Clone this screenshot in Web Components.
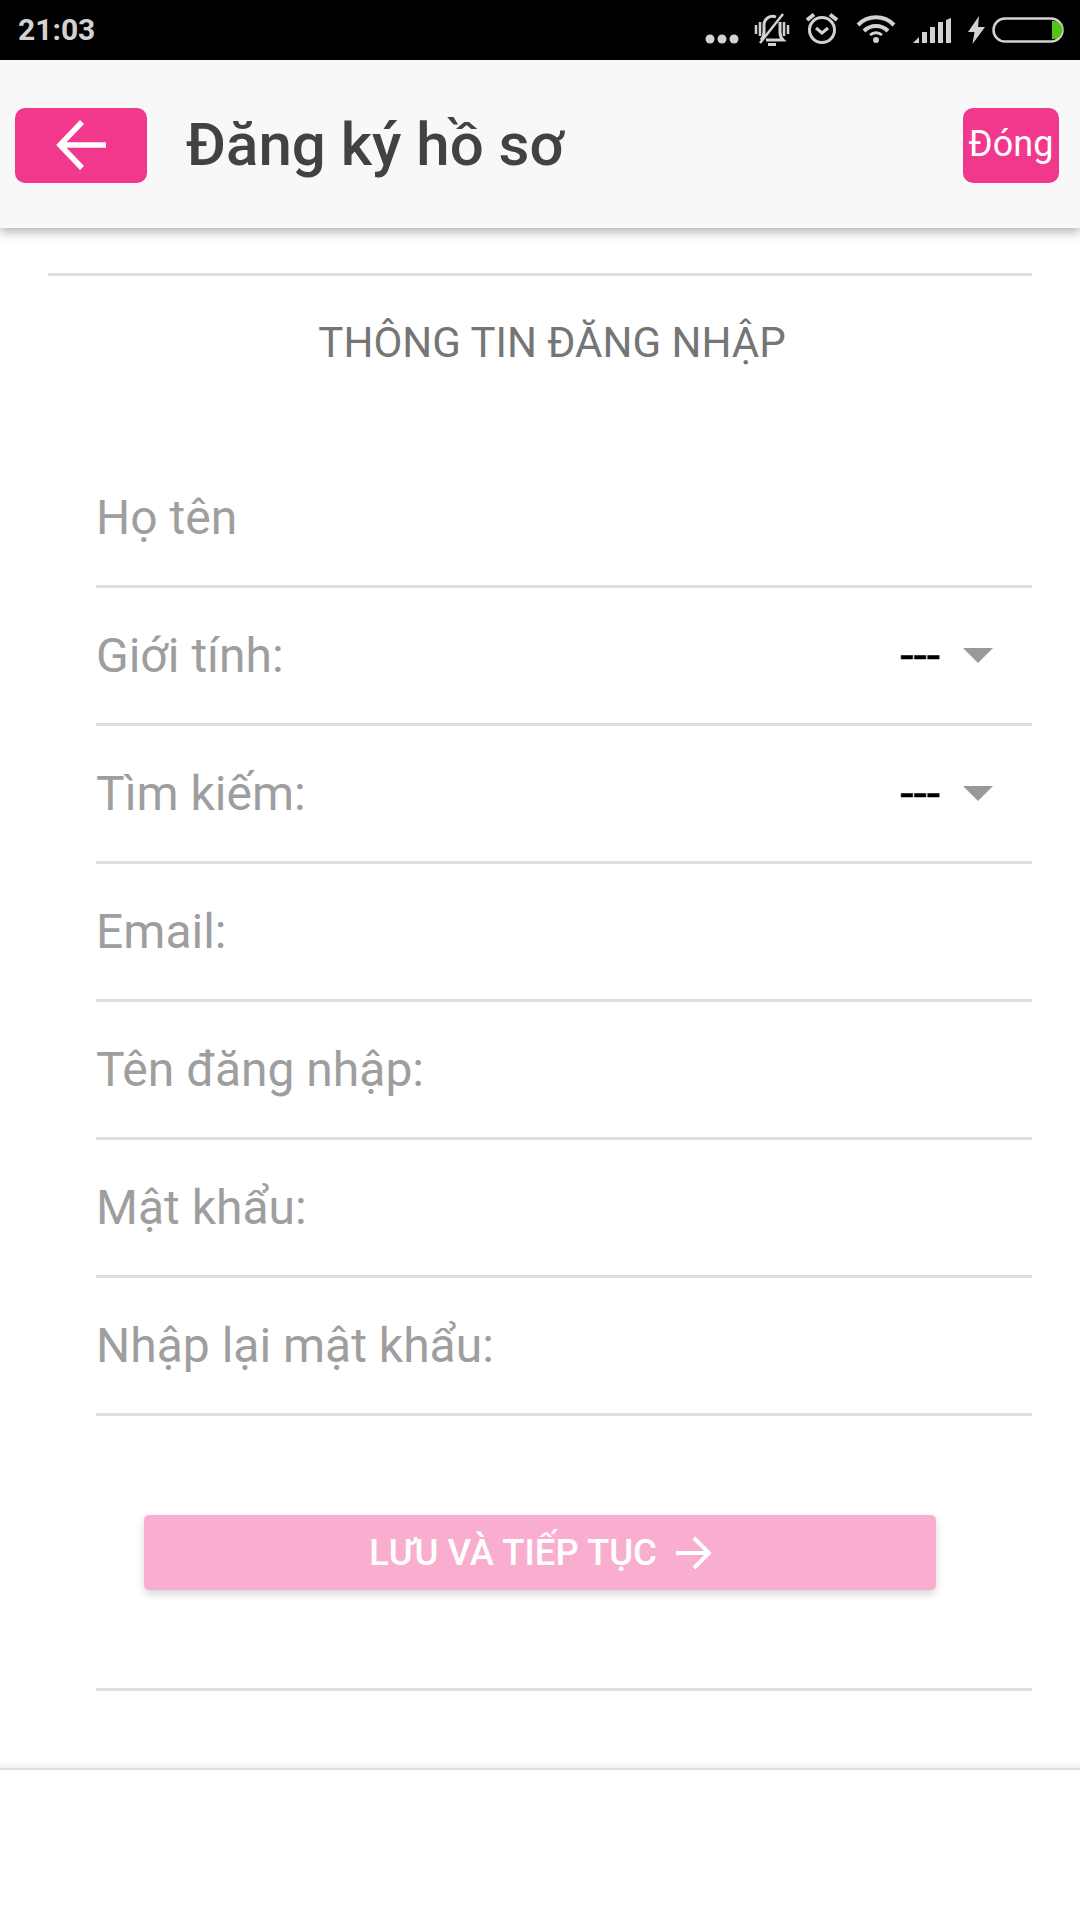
<!DOCTYPE html>
<html lang="vi">
<head>
<meta charset="utf-8">
<title>Đăng ký hồ sơ</title>
<style>
    html, body { margin: 0; padding: 0; background: #fff; }
    body { width: 1080px; height: 1920px; overflow: hidden; font-family: Roboto, "Noto Sans", sans-serif; }
</style>
</head>
<body>
<app-status-bar></app-status-bar>
<app-header title="Đăng ký hồ sơ" action="Đóng"></app-header>
<register-form heading="THÔNG TIN ĐĂNG NHẬP">
    <form-row label="Họ tên"></form-row>
    <form-row label="Giới tính:" value="---"></form-row>
    <form-row label="Tìm kiếm:" value="---"></form-row>
    <form-row label="Email:"></form-row>
    <form-row label="Tên đăng nhập:"></form-row>
    <form-row label="Mật khẩu:"></form-row>
    <form-row label="Nhập lại mật khẩu:"></form-row>
</register-form>

<script>
class AppStatusBar extends HTMLElement {
    constructor() {
        super();
        this.attachShadow({ mode: 'open' });
    }

    connectedCallback() {
        this.shadowRoot.innerHTML = `
            <style>
                :host {
                    display: flex;
                    align-items: center;
                    justify-content: space-between;
                    height: 60px;
                    background: #000;
                    padding: 0 16px 0 18px;
                    box-sizing: border-box;
                    color: #d2d2d2;
                }
                .time { font: 700 30px/60px Roboto, sans-serif; }
                .icons { display: flex; align-items: flex-start; height: 60px; }
                svg { display: block; flex: none; }
            </style>
            <span class="time">21:03</span>
            <div class="icons">
                <!-- dots -->
                <svg width="34" height="60" viewBox="0 0 34 60" style="margin-right:15px">
                    <g fill="#d2d2d2"><circle cx="5" cy="39" r="4.500"/><circle cx="17" cy="39" r="4.500"/><circle cx="29" cy="39" r="4.500"/></g>
                </svg>
                <!-- muted bell -->
                <svg width="36" height="60" viewBox="0 0 36 60" style="margin-right:15px">
                    <g fill="none" stroke="#d2d2d2" stroke-width="3">
                        <path d="M7 40q3-3 3-8v-7a8.500 8.500 0 0 1 12-8"/>
                        <path d="M26 22v10q0 5 3 8H12"/>
                        <path d="M14 44.500h8" stroke-width="3"/>
                        <path d="M2 25v9M6 22v14M30 22v14M34 25v9" stroke-width="2.500"/>
                        <path d="M6 43 L29 14" stroke-width="2.500"/>
                    </g>
                </svg>
                <!-- alarm -->
                <svg width="34" height="60" viewBox="0 0 34 60" style="margin-right:17px">
                    <g fill="none" stroke="#d2d2d2">
                        <circle cx="17" cy="30" r="12.500" stroke-width="3"/>
                        <path d="M11 28l6 5 6-5" stroke-width="3"/>
                        <path d="M2 20l7-5.500M32 20l-7-5.500" stroke-width="4"/>
                    </g>
                </svg>
                <!-- wifi -->
                <svg width="40" height="60" viewBox="0 0 40 60" style="margin-right:17px">
                    <g fill="none" stroke="#d2d2d2" stroke-width="4">
                        <path d="M2 25a25 25 0 0 1 36 0"/>
                        <path d="M8 31a17 17 0 0 1 24 0"/>
                    </g>
                    <path d="M14 35a9 9 0 0 1 12 0" fill="none" stroke="#d2d2d2" stroke-width="3"/>
                    <circle cx="20" cy="40" r="3" fill="#d2d2d2"/>
                </svg>
                <!-- signal -->
                <svg width="38" height="60" viewBox="0 0 38 60" style="margin-right:17px">
                    <g fill="#d2d2d2">
                        <path d="M0 43l6-6v6z"/>
                        <rect x="9" y="32" width="5" height="11"/>
                        <rect x="17" y="27" width="5" height="16"/>
                        <rect x="25" y="22" width="5" height="21"/>
                        <path d="M33 20l5-2v25h-5z"/>
                    </g>
                </svg>
                <!-- bolt -->
                <svg width="17" height="60" viewBox="0 0 17 60" style="margin-right:7px">
                    <path d="M11 16 L0 32 H6.500 L4.500 44 L17 27 H10z" fill="#d2d2d2"/>
                </svg>
                <!-- battery -->
                <svg width="72" height="60" viewBox="0 0 72 60">
                    <rect x="1.500" y="18.500" width="69" height="23" rx="11.500" fill="none" stroke="#d2d2d2" stroke-width="2.500"/>
                    <path d="M60 21h2a8.500 9 0 0 1 0 18h-2z" fill="#52c41a"/>
                </svg>
            </div>`;
    }
}

class AppHeader extends HTMLElement {
    constructor() {
        super();
        this.attachShadow({ mode: 'open' });
    }

    connectedCallback() {
        this.shadowRoot.innerHTML = `
            <style>
                :host {
                    display: flex;
                    align-items: center;
                    position: relative;
                    z-index: 1;
                    height: 168px;
                    box-sizing: border-box;
                    padding: 3px 21px 0 15px;
                    background: #f8f8f8;
                    box-shadow: 0 4px 10px rgba(0,0,0,0.3);
                }
                .btn {
                    display: flex;
                    align-items: center;
                    justify-content: center;
                    height: 75px;
                    background: #f2388c;
                    border-radius: 10px;
                    color: #fff;
                }
                .back { width: 132px; }
                .back svg { margin-left: 2px; margin-top: -2px; }
                .close { width: 96px; font: 400 36px/72px Roboto, sans-serif; padding-bottom: 3px; height: 72px; }
                h1 {
                    flex: 1;
                    margin: -2px 0 0 39px;
                    font: 500 60px/75px Roboto, sans-serif;
                    color: #424242;
                }
            </style>
            <div class="btn back">
                <svg width="52" height="52" viewBox="0 0 52 52" fill="none" stroke="#fff" stroke-width="5.500">
                    <path d="M50 26H5M26 3L4 26l22 23"/>
                </svg>
            </div>
            <h1>${this.getAttribute('title')}</h1>
            <div class="btn close">${this.getAttribute('action')}</div>`;
    }
}

class FormRow extends HTMLElement {
    constructor() {
        super();
        this.attachShadow({ mode: 'open' });
    }

    connectedCallback() {
        const value = this.getAttribute('value');
        this.shadowRoot.innerHTML = `
            <style>
                :host {
                    display: flex;
                    align-items: center;
                    height: 138px;
                    box-sizing: border-box;
                    margin-left: 48px;
                    border-bottom: 3px solid #dedede;
                    font: 400 48px/1 Roboto, sans-serif;
                    color: #9e9e9e;
                }
                .label { flex: 1; }
                .value { color: #000; font-size: 48px; margin-right: 23px; -webkit-text-stroke: 0.5px #000; }
                .caret {
                    width: 0;
                    height: 0;
                    margin-right: 39px;
                    border-left: 15px solid transparent;
                    border-right: 15px solid transparent;
                    border-top: 15px solid #999;
                }
            </style>
            <span class="label">${this.getAttribute('label')}</span>
            ${value ? `<span class="value">${value}</span><span class="caret"></span>` : ''}`;
    }
}

class RegisterForm extends HTMLElement {
    constructor() {
        super();
        this.attachShadow({ mode: 'open' });
    }

    connectedCallback() {
        this.shadowRoot.innerHTML = `
            <style>
                :host {
                    display: block;
                    box-sizing: border-box;
                    height: 1542px;
                    padding: 45px 48px 0 48px;
                    border-bottom: 2px solid #e0e0e0;
                    box-shadow: inset 0 -6px 5px -3px rgba(0,0,0,0.06);
                    font-family: Roboto, sans-serif;
                }
                .top { height: 3px; background: #dedede; }
                h2 {
                    margin: 0;
                    height: 132px;
                    padding-top: 44px;
                    box-sizing: border-box;
                    text-align: center;
                    font: 400 42px/46px Roboto, sans-serif;
                    color: #757575;
                    padding-left: 24px;
                }
                .rows { margin-top: 42px; }
                .save {
                    display: flex;
                    align-items: center;
                    justify-content: center;
                    gap: 18px;
                    height: 75px;
                    box-sizing: border-box;
                    padding-top: 1px;
                    margin: 99px 96px 0 96px;
                    background: #f9aed0;
                    border-radius: 5px;
                    box-shadow: 0 4px 8px rgba(0,0,0,0.16);
                    color: #fff;
                    font: 500 36.500px/74px Roboto, sans-serif;
                }
                .bottom { height: 3px; margin: 98px 0 0 48px; background: #dedede; }
            </style>
            <div class="top"></div>
            <h2>${this.getAttribute('heading')}</h2>
            <div class="rows"><slot></slot></div>
            <div class="save">
                <span>LƯU VÀ TIẾP TỤC</span>
                <svg width="36" height="36" viewBox="0 0 36 36" fill="none" stroke="#fff" stroke-width="4">
                    <path d="M1 18h32M19 3l15 15-15 15"/>
                </svg>
            </div>
            <div class="bottom"></div>`;
    }
}

customElements.define('app-status-bar', AppStatusBar);
customElements.define('app-header', AppHeader);
customElements.define('form-row', FormRow);
customElements.define('register-form', RegisterForm);
</script>
</body>
</html>
